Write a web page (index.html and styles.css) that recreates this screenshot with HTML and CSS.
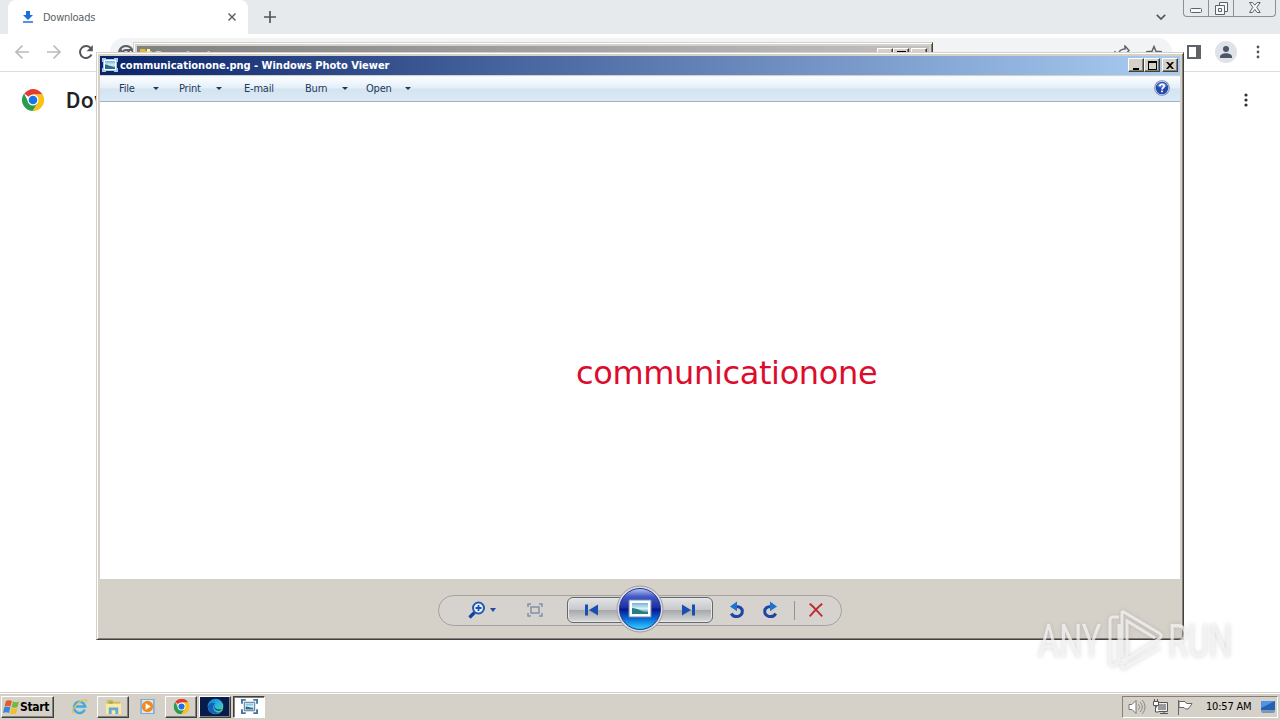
FILE: index.html
```html
<!DOCTYPE html>
<html lang="en">
<head>
  <meta charset="UTF-8">
  <title>Downloads</title>
  <link rel="stylesheet" href="styles.css">
</head>
<body>
  <svg class="defs">
    <defs>
      <linearGradient id="orb" x1="0" y1="0" x2="0" y2="1">
        <stop offset="0" stop-color="#b9c6ee"/>
        <stop offset=".2" stop-color="#4258c4"/>
        <stop offset=".48" stop-color="#1b2ca0"/>
        <stop offset=".5" stop-color="#07128a"/>
        <stop offset=".75" stop-color="#0870d8"/>
        <stop offset="1" stop-color="#35d5fc"/>
      </linearGradient>
      <linearGradient id="photo" x1="0" y1="0" x2="0" y2="1">
        <stop offset="0" stop-color="#6fb3dc"/>
        <stop offset=".5" stop-color="#d9f0f4"/>
        <stop offset="1" stop-color="#2a7c8e"/>
      </linearGradient>
      <linearGradient id="edge" x1="0" y1="0" x2="1" y2="1">
        <stop offset="0" stop-color="#0b75c5"/>
        <stop offset=".5" stop-color="#2db5e4"/>
        <stop offset="1" stop-color="#58d878"/>
      </linearGradient>
      <symbol id="chrome" viewBox="0 0 24 24">
        <path fill="#e33b2e" d="M12 12 2.500 5A12 12 0 0 1 22.500 6H12z"/>
        <path fill="#fbc116" d="M22.500 6A12 12 0 0 1 11.500 24L17.200 15 12 6z"/>
        <path fill="#2a9d4b" d="M2.300 5A12 12 0 0 0 11.500 24l5.700-9L12 17.500 6.800 14z"/>
        <circle cx="12" cy="12" r="6" fill="#fff"/>
        <circle cx="12" cy="12" r="4.700" fill="#1b73e8"/>
      </symbol>
      <symbol id="picture" viewBox="0 0 16 14">
        <path fill="#a9cbe6" d="M0 0h4v1h8V0h4v4h-1v6h1v4h-4v-1H4v1H0v-4h1V4H0z"/>
        <path fill="#fff" d="M2 2h12v10H2z"/>
        <path fill="url(#photo)" d="M3 3h10v8H3z"/>
        <path fill="#286b86" d="M3 6.500c3 0 5 2 10 3V11H3z"/>
      </symbol>
      <symbol id="turn" viewBox="0 0 16 18">
        <path fill="none" stroke="#1f46a5" stroke-width="3" d="M6.500 5.500C11 5.200 13.300 7.600 13.300 10.300c0 5.600-8.300 7.300-11 2.200"/>
        <path fill="#1b74d2" d="M8 .5v9.800L1 5.400z"/>
      </symbol>
    </defs>
  </svg>

  <div class="desktop">
    <!-- browser in the background -->
    <div class="browser">
      <div class="tab-strip">
        <div class="tab">
          <svg class="tab-icon" viewBox="0 0 12 12"><path fill="#1a6fe0" d="M4 0h4v4h3L6 9 1 4h3zM1 10.200h10v1.500H1z"/></svg>
          <span class="tab-title">Downloads</span>
          <svg class="tab-close" viewBox="0 0 8 8"><path d="m.5.5 7 7m0-7-7 7"/></svg>
        </div>
        <svg class="tab-new" viewBox="0 0 12 12"><path d="M6 0v12M0 6h12"/></svg>
        <svg class="tab-search" viewBox="0 0 10 6"><path d="m.8.8 4.200 4.200L9.200.8"/></svg>
        <div class="browser-buttons">
          <span class="bb-min"><svg width="13" height="6"><rect x=".5" y=".5" width="11" height="4" rx="1"/></svg></span>
          <span class="bb-max"><svg width="13" height="13"><path d="M4.500 3.500v-3h8v9h-3M.5 3.500h9v9h-9zM3.500 6.500h3v3h-3z"/></svg></span>
          <span class="bb-close"><svg width="12" height="11"><path d="M.5.5h3l2.300 2.700L8.200.5h3L7.800 5.300l3.400 5.200h-3L5.800 7.500l-2.300 3h-3l3.300-5.200z"/></svg></span>
        </div>
      </div>
      <div class="toolbar">
        <svg class="nav-icon nav-off" viewBox="0 0 16 16"><path d="M15 8H2m6.500-6.500L2 8l6.500 6.500"/></svg>
        <svg class="nav-icon nav-off" viewBox="0 0 16 16"><path d="M1 8h13M7.500 1.500 14 8l-6.500 6.500"/></svg>
        <svg class="nav-icon" viewBox="0 0 16 16"><path d="M13.500 10.500a6 6 0 1 1-.6-6"/><path class="solid" d="M14.800 1v6.200H8.600z"/></svg>
        <div class="address">
          <svg class="address-icon" viewBox="0 0 16 16"><circle cx="8" cy="8" r="7"/><circle cx="8" cy="8" r="3"/><path d="M8 5h6.500M5.500 9.500 2 4"/></svg>
          <svg class="share-icon" viewBox="0 0 16 16"><path d="M1 6v8h12v-3M4 10c1-5 4-6 7-6V1l4 4.500L11 10V7"/></svg>
          <svg class="star-icon" viewBox="0 0 16 16"><path d="m8 1.500 2 4.700 5 .4-3.800 3.300 1.100 5L8 12.200l-4.300 2.700 1.100-5L1 6.600l5-.4z"/></svg>
        </div>
        <svg class="panel-icon" viewBox="0 0 14 14"><path fill="#5f6368" fill-rule="evenodd" d="M0 0h14v14H0zM2 2v10h7V2z"/></svg>
        <svg class="avatar" viewBox="0 0 22 22"><circle cx="11" cy="11" r="11" fill="#dfe2e7"/><circle cx="11" cy="8" r="3" fill="#4c5569"/><path fill="#4c5569" d="M5 16c0-5 12-5 12 0v1H5z"/></svg>
        <svg class="dots" viewBox="0 0 4 14"><circle cx="2" cy="2" r="1.400"/><circle cx="2" cy="7" r="1.400"/><circle cx="2" cy="12" r="1.400"/></svg>
      </div>
      <div class="page-header">
        <svg class="page-logo"><use href="#chrome"/></svg>
        <h1>Downloads</h1>
        <svg class="dots dots-dark" viewBox="0 0 4 14"><circle cx="2" cy="2" r="1.600"/><circle cx="2" cy="7" r="1.600"/><circle cx="2" cy="12" r="1.600"/></svg>
      </div>
    </div>

    <!-- explorer window, mostly covered -->
    <div class="window explorer">
      <div class="title-bar">
        <svg class="folder" viewBox="0 0 14 14"><path fill="#e8b934" d="M1 1h5l1 2h6v10H1z"/><path fill="#fff3b8" d="M3 4h4v8H2zM8 1h3v8H8z"/></svg>
        <span class="title">Downloads</span>
        <div class="caption-buttons">
          <b><svg width="10" height="9"><path d="M1 7h6v2H1z"/></svg></b>
          <b><svg width="10" height="9"><path fill-rule="evenodd" d="M0 0h9v9H0zM1 2v6h7V2z"/></svg></b>
          <b class="close"><svg width="9" height="9"><path d="M0 1h2l2 2 2-2h2L5 4.500 8 8H6L4 6 2 8H0l3-3.500z"/></svg></b>
        </div>
      </div>
    </div>

    <!-- photo viewer -->
    <div class="window viewer">
      <div class="title-bar">
        <svg class="viewer-icon"><use href="#picture"/></svg>
        <span class="title">communicationone.png - Windows Photo Viewer</span>
        <div class="caption-buttons">
          <b><svg width="10" height="9"><path d="M1 7h6v2H1z"/></svg></b>
          <b><svg width="10" height="9"><path fill-rule="evenodd" d="M0 0h9v9H0zM1 2v6h7V2z"/></svg></b>
          <b class="close"><svg width="9" height="9"><path d="M0 1h2l2 2 2-2h2L5 4.500 8 8H6L4 6 2 8H0l3-3.500z"/></svg></b>
        </div>
      </div>
      <div class="menu-bar">
        <span class="menu menu-file">File<i></i></span>
        <span class="menu menu-print">Print<i></i></span>
        <span class="menu menu-mail">E-mail</span>
        <span class="menu menu-burn">Burn<i></i></span>
        <span class="menu menu-open">Open<i></i></span>
        <svg class="help" viewBox="0 0 16 16"><circle cx="8" cy="8" r="7.800" fill="#7386ad"/><circle cx="8" cy="8" r="7" fill="#d5def0"/><circle cx="8" cy="8" r="6.300" fill="#2448ae"/><path fill="#6684d2" d="M3 6a5.500 5.500 0 0 1 10 0c-3 2-7 2-10 0z"/><path fill="none" stroke="#fff" stroke-width="1.700" d="M5.800 6.200C6 3.500 10.300 3.700 10.200 6.200 10.100 7.800 8 7.700 8 9.600"/><path fill="#fff" d="M7.100 10.600h1.800v1.700H7.100z"/></svg>
      </div>
      <div class="canvas"><span class="word">communicationone</span></div>
      <div class="controls">
        <div class="pill">
          <svg class="zoom" viewBox="0 0 18 18"><path stroke="#1b3f98" stroke-width="3.200" d="m1.500 16.500 5-5"/><circle cx="10.500" cy="7" r="5.500" fill="#e8f2fa" stroke="#2459b5" stroke-width="2"/><path stroke="#1b4eb0" stroke-width="1.800" d="M7.500 7h6m-3-3v6"/></svg>
          <i class="zoom-arrow"></i>
          <svg class="fit" viewBox="0 0 16 14"><path fill="none" stroke="#8193ab" stroke-width="1.500" d="M4 4h8v6H4zM1 4V1h3m8 0h3v3M1 10v3h3m8 0h3v-3"/></svg>
          <div class="transport">
            <span class="prev"><svg width="15" height="12"><path fill="#194fad" d="M1 .5h3v11H1zM14 .5v11L5 6z"/></svg></span>
            <span class="next"><svg width="15" height="12"><path fill="#194fad" d="M1 .5v11L10 6zM11 .5h3v11h-3z"/></svg></span>
            <svg class="play" viewBox="0 0 48 48"><circle cx="24" cy="24" r="23" fill="#d9dbe1" stroke="#9b9da5"/><circle cx="24" cy="24" r="20.500" fill="url(#orb)" stroke="#26358e"/><path fill="#fff" stroke="#7587b4" d="M13 15h22v17H13z"/><path fill="url(#photo)" d="M16 18h16v11H16z"/><path fill="#277f83" d="M16 23c6 0 9 4 16 4v2H16z"/></svg>
          </div>
          <svg class="rotate"><use href="#turn"/></svg>
          <svg class="rotate rotate-right"><use href="#turn"/></svg>
          <span class="divider"></span>
          <svg class="delete" viewBox="0 0 14 14"><path fill="none" stroke="#bf2b32" stroke-width="1.900" d="M.7.7c4 3 8 8 12.500 12.600M13.200.7C9 4 4.500 9 .7 13.300"/></svg>
        </div>
      </div>
    </div>

    <div class="watermark">
      <span>ANY</span>
      <svg viewBox="0 0 58 64"><path d="M14 8H8a3 3 0 0 0-3 3v43a3 3 0 0 0 4 2l5-3V15m3-13v46M17 2l37 22c3 2 3 4 0 6L22 50v-38l28 17M17 60l38-22M17 54v6"/></svg>
      <span>RUN</span>
    </div>

    <div class="taskbar">
      <div class="start">
        <svg viewBox="0 0 16 14"><path fill="#e45b28" d="M3 1c2-1 4-1 6 0L7.500 6.500c-2-1-4-1-6 0z"/><path fill="#74b83c" d="M10 1.500c2 1 4 1 6 0L14.500 7c-2 1-4 1-6 0z"/><path fill="#3c86d4" d="M1.300 7.300c2-1 4-1 6 0L6 13c-2-1-4-1-6 0z"/><path fill="#f3bd2c" d="M8.300 8c2 1 4 1 6 0L13 13.500c-2 1-4 1-6 0z"/></svg>
        Start
      </div>
      <div class="task"><svg viewBox="0 0 18 18"><path fill="none" stroke="#42a9df" stroke-width="2.600" d="M14.500 12.500a6 6 0 1 1 .5-3.500H5"/><path fill="none" stroke="#dfc45c" stroke-width="1.400" d="M3 16c-5 0 3-12 11-14 3-.5 3 1 2 3"/></svg></div>
      <div class="task raised"><svg viewBox="0 0 18 18"><path fill="#d9b858" d="M2 2h6l1 2h7v13H2z"/><path fill="#fbeaa2" d="M1 6h16v11H1z"/><path fill="#64a9d8" d="M4 10h10v7h-3v-4H7v4H4z"/><path fill="#7fb85a" d="M4 4h4v2H4z"/></svg></div>
      <div class="task"><svg viewBox="0 0 18 18"><path fill="#74a9d8" d="M1.500 1h15v16h-15z"/><path fill="#d8e9f5" d="M3 2h12v14H3z"/><circle cx="9" cy="9" r="6" fill="#f18a1b"/><path fill="#fff" d="M7 5.500 12.500 9 7 12.500z"/></svg></div>
      <div class="task raised"><svg viewBox="-1 -1 26 26"><use href="#chrome" width="24" height="24"/></svg></div>
      <div class="task raised edge"><svg viewBox="0 0 18 18"><circle cx="9" cy="9" r="8.300" fill="url(#edge)"/><path fill="#1560b4" d="M1 9c1-4 6-5 8-3-3 1-4 7 1 9 2 1 4 0 5-1-2 4-13 5-14-5z"/><path fill="#06265e" d="M9 8c-2 3 1 5 7 4-3 3-9 1-8-3z"/></svg></div>
      <div class="task pressed"><svg viewBox="0 0 18 16"><path fill="none" stroke="#4475a1" stroke-width="2" d="M1 5V1h4m8 0h4v4M1 11v4h4m8 0h4v-4"/><path fill="#e5eff5" stroke="#486f90" d="M3.500 3.500h11v9h-11z"/><path fill="url(#photo)" d="M5 5h8v6H5z"/><path fill="#2b6f85" d="M5 8c3 0 5 1.500 8 2v1H5z"/></svg></div>

      <div class="tray">
        <svg class="tray-icon" viewBox="0 0 18 16"><path fill="#fff" stroke="#777" d="M1 5.500h3l4-4v13l-4-4H1z"/><path fill="none" stroke="#888" d="M10 5c2 2 2 4 0 6m2-8c3 3 3 7 0 10m2-12c4 4 4 10 0 14"/></svg>
        <svg class="tray-icon" viewBox="0 0 18 16"><path fill="#eee" stroke="#555" d="M4.500 3.500h11v9h-11zM8 14.500h8m-4-2v2"/><path fill="#999" d="M6 5h8v6H6z"/><path fill="#fff" stroke="#555" d="M1.500 2.500h5v4h-5zM2.500 0v2m3-2v2M3.500 6v7h3"/></svg>
        <svg class="tray-icon" viewBox="0 0 18 16"><path fill="#fff" stroke="#666" d="M2.500 1v15M3 2.500h6l1.500 2H16l-2 3-2 2.500H9.500L8 8.500H3z"/></svg>
        <span class="clock">10:57 AM</span>
        <svg class="show-desktop" viewBox="0 0 16 14"><path fill="#2461b5" d="M1 1h14v9.500H1z"/><path fill="#4f95df" d="M1 1h14L1 8z"/><path fill="#7d98b4" d="M1 11h14l-1 2H2z"/></svg>
      </div>
    </div>
  </div>
</body>
</html>
```

FILE: styles.css
```css
* {
  box-sizing: border-box;
}
body {
  margin: 0;
  font-family: "DejaVu Sans Condensed", "DejaVu Sans", sans-serif;
  font-stretch: condensed;
  font-size: 11px;
  color: #000;
}
svg {
  display: block;
  flex: none;
}
.defs {
  position: absolute;
  width: 0;
  height: 0;
}
.desktop {
  position: relative;
  width: 1280px;
  height: 720px;
  overflow: hidden;
  background: #fff;
}

/* browser */
.tab-strip {
  height: 34px;
  display: flex;
  align-items: center;
  background: #e7eaed;
  padding-left: 8px;
}
.tab {
  width: 240px;
  height: 34px;
  background: #fff;
  border-radius: 8px 8px 0 0;
  display: flex;
  align-items: center;
  padding: 0 12px 0 14px;
}
.tab-icon {
  width: 12px;
  height: 12px;
}
.tab-title {
  margin-left: 9px;
  color: #5b5f64;
  letter-spacing: -.25px;
}
.tab-close {
  width: 8px;
  height: 8px;
  margin-left: auto;
}
.tab-close path, .tab-new path, .tab-search path {
  fill: none;
  stroke: #53575c;
  stroke-width: 1.7;
}
.tab-close path {
  stroke-width: 1.4;
}
.tab-new {
  width: 12px;
  height: 12px;
  margin-left: 16px;
}
.tab-search {
  width: 10px;
  height: 6px;
  margin-left: auto;
}
.browser-buttons {
  display: flex;
  align-self: flex-start;
  margin: 0 4px 0 17px;
  height: 17px;
  border: 1px solid #8b9095;
  border-top: 0;
  border-radius: 0 0 4px 4px;
}
.browser-buttons span {
  display: flex;
  justify-content: center;
  border-right: 1px solid #8b9095;
  width: 25px;
  padding-top: 2px;
}
.browser-buttons .bb-min {
  padding-top: 8px;
}
.browser-buttons .bb-close {
  width: 41px;
  border: 0;
}
.browser-buttons svg {
  fill: #f6f7f8;
  stroke: #5c6268;
}
.toolbar {
  height: 38px;
  display: flex;
  align-items: center;
  padding: 0 20px 2px 14px;
  border-bottom: 1px solid #dcdde0;
}
.nav-icon {
  width: 16px;
  height: 16px;
  margin-right: 16px;
}
.nav-icon path {
  fill: none;
  stroke: #53575c;
  stroke-width: 2;
}
.nav-icon .solid {
  fill: #53575c;
  stroke: none;
}
.nav-off path {
  stroke: #b9bbbe;
  stroke-width: 1.7;
}
.address {
  width: 1062px;
  height: 28px;
  display: flex;
  align-items: center;
  background: #f1f3f4;
  border-radius: 14px;
  padding: 2px 10px 0 8px;
}
.address svg {
  width: 16px;
  height: 16px;
  fill: none;
  stroke: #5f6368;
  stroke-width: 1.5;
}
.address .address-icon {
  stroke-width: 2.2;
}
.share-icon {
  margin-left: auto;
}
.star-icon {
  margin-left: 16px;
}
.panel-icon {
  width: 14px;
  height: 14px;
  margin-left: 15px;
}
.avatar {
  width: 22px;
  height: 22px;
  margin-left: 14px;
}
.dots {
  width: 4px;
  height: 14px;
  margin-left: auto;
  fill: #53575c;
}
.page-header {
  display: flex;
  align-items: center;
  height: 56px;
  padding: 0 32px 0 22px;
}
.page-logo {
  width: 22px;
  height: 22px;
}
.page-header h1 {
  width: 30px;
  overflow: hidden;
  margin: 0 0 0 22px;
  font: 500 22px Roboto, sans-serif;
  letter-spacing: .7px;
  color: #202124;
}
.dots-dark {
  fill: #303236;
}

/* classic windows */
.window {
  position: absolute;
  background: #d5d0c8;
  border: 1px solid #d5d0c8;
  border-right-color: #404040;
  border-bottom-color: #404040;
  box-shadow: inset 1px 1px #fff, inset -1px -1px #858077;
}
.explorer {
  left: 133px;
  top: 42px;
  width: 800px;
  height: 14px;
  overflow: hidden;
  padding: 3px;
}
.viewer {
  left: 96px;
  top: 52px;
  width: 1088px;
  height: 588px;
  padding: 3px;
  display: flex;
  flex-direction: column;
}
.title-bar {
  height: 19px;
  flex: none;
  display: flex;
  align-items: center;
  padding: 0 2px 1px;
  background: linear-gradient(90deg, #0a246a, #a6caf0 98%);
  color: #fff;
  font-weight: bold;
}
.explorer .title-bar {
  background: linear-gradient(90deg, #808080, #c0c0c0);
  color: #d5d0c8;
}
.viewer-icon {
  width: 16px;
  height: 14px;
}
.folder {
  width: 14px;
  height: 14px;
}
.title {
  margin-left: 2px;
  white-space: nowrap;
  letter-spacing: -.01px;
}
.caption-buttons {
  display: flex;
  margin-left: auto;
}
.caption-buttons b {
  width: 16px;
  height: 14px;
  padding: 2px 0 0 3px;
  background: #d5d0c8;
  border: 1px solid #fff;
  border-right-color: #404040;
  border-bottom-color: #404040;
  box-shadow: inset -1px -1px #858077;
}
.caption-buttons .close {
  margin-left: 2px;
}
.menu-bar {
  height: 26px;
  flex: none;
  display: flex;
  align-items: center;
  padding: 0 10px 2px 19px;
  margin-top: 1px;
  border-top: 1px solid #f4f8fc;
  border-bottom: 1px solid #a0b1c5;
  background: linear-gradient(#fafdff, #e4eff8 45%, #d4e4f1 50%, #dce9f5);
  color: #1e395b;
}
.menu {
  display: flex;
  align-items: center;
  justify-content: space-between;
  letter-spacing: -.2px;
}
.menu i, .zoom-arrow {
  border: 3px solid transparent;
  border-top-color: #1e395b;
  border-bottom: 0;
}
.menu-file {
  width: 40px;
  margin-right: 20px;
}
.menu-print {
  width: 43px;
  margin-right: 22px;
}
.menu-mail {
  width: 61px;
}
.menu-burn {
  width: 43px;
  margin-right: 18px;
}
.menu-open {
  width: 45px;
}
.help {
  width: 16px;
  height: 16px;
  margin-left: auto;
}
.canvas {
  height: 477px;
  flex: none;
  background: #fff;
  padding: 252px 0 0 476px;
}
.word {
  display: block;
  font: 32px/38px "DejaVu Sans", sans-serif;
  font-stretch: normal;
  letter-spacing: -.36px;
  color: #dc0c2c;
}
.controls {
  flex: 1;
  display: flex;
  justify-content: center;
  align-items: center;
  padding-top: 5px;
}
.pill {
  width: 404px;
  height: 31px;
  display: flex;
  align-items: center;
  padding-left: 29px;
  border: 1px solid #a5a29d;
  border-radius: 16px;
  background: #d6d3ce;
}
.zoom {
  width: 18px;
  height: 18px;
}
.zoom-arrow {
  margin-left: 4px;
  border-top: 4px solid #1b4da3;
}
.fit {
  width: 16px;
  height: 14px;
  margin-left: 31px;
}
.transport {
  position: relative;
  display: flex;
  margin-left: 24px;
}
.transport span {
  width: 73px;
  height: 26px;
  display: flex;
  align-items: center;
  border: 1px solid #65676b;
  box-shadow: inset 0 0 0 1px #e5e7e9;
  background: linear-gradient(#e3e4e6, #c7c9cc 48%, #a5a7aa 50%, #dadbdc);
}
.transport .prev {
  border-radius: 6px 0 0 6px;
  padding-left: 16px;
}
.transport .next {
  border-radius: 0 6px 6px 0;
  justify-content: flex-end;
  padding-right: 16px;
}
.play {
  position: absolute;
  left: 49px;
  top: -12px;
  width: 48px;
  height: 48px;
}
.rotate {
  width: 16px;
  height: 18px;
  margin-left: 16px;
}
.rotate-right {
  transform: scaleX(-1);
  margin-left: 17px;
}
.divider {
  width: 1px;
  height: 19px;
  margin-left: 16px;
  background: #96938e;
}
.delete {
  width: 14px;
  height: 14px;
  margin-left: 14px;
}

.watermark {
  position: absolute;
  left: 1038px;
  top: 609px;
  width: 200px;
  height: 64px;
  display: flex;
  align-items: center;
  color: rgba(245, 245, 245, .75);
  font: 47px/64px Roboto, sans-serif;
  filter: drop-shadow(0 0 2px rgba(130, 130, 130, .45));
}
.watermark span {
  width: 67px;
  flex: none;
  transform: scaleX(.69);
  transform-origin: left;
}
.watermark svg {
  width: 58px;
  height: 64px;
  margin-right: 5px;
  fill: none;
  stroke: rgba(245, 245, 245, .75);
  stroke-width: 3;
}

/* taskbar */
.taskbar {
  position: absolute;
  left: 0;
  bottom: 0;
  width: 1280px;
  height: 28px;
  display: flex;
  align-items: center;
  padding: 1px 2px 1px 1px;
  background: #d5d0c8;
  border-top: 1px solid #d5d0c8;
  box-shadow: inset 0 1px #fff;
}
.start, .raised, .pressed {
  border: 1px solid #fff;
  border-right-color: #404040;
  border-bottom-color: #404040;
  box-shadow: inset -1px -1px #858077;
}
.start {
  width: 53px;
  height: 22px;
  display: flex;
  align-items: center;
  font-weight: bold;
  font-size: 12px;
  letter-spacing: -.3px;
  margin-right: 9px;
}
.start svg {
  width: 16px;
  height: 14px;
  margin: 0 1px 0 1px;
}
.task {
  width: 32px;
  height: 22px;
  margin-right: 2px;
  display: flex;
  align-items: center;
  justify-content: center;
}
.task svg {
  width: 17px;
  height: 17px;
}
.edge {
  background: #081c4c;
}
.pressed {
  background: #fff;
  border-color: #404040 #fff #fff #404040;
  box-shadow: inset 1px 1px #858077;
}
.tray {
  width: 156px;
  height: 22px;
  display: flex;
  align-items: center;
  margin-left: auto;
  padding-left: 5px;
  border: 1px solid #858077;
  border-right-color: #fff;
  border-bottom-color: #fff;
}
.tray-icon {
  width: 18px;
  height: 16px;
  margin-right: 6px;
}
.clock {
  margin-left: 6px;
  white-space: nowrap;
  letter-spacing: -.2px;
}
.show-desktop {
  width: 16px;
  height: 14px;
  margin-left: auto;
  margin-right: 1px;
}
```
